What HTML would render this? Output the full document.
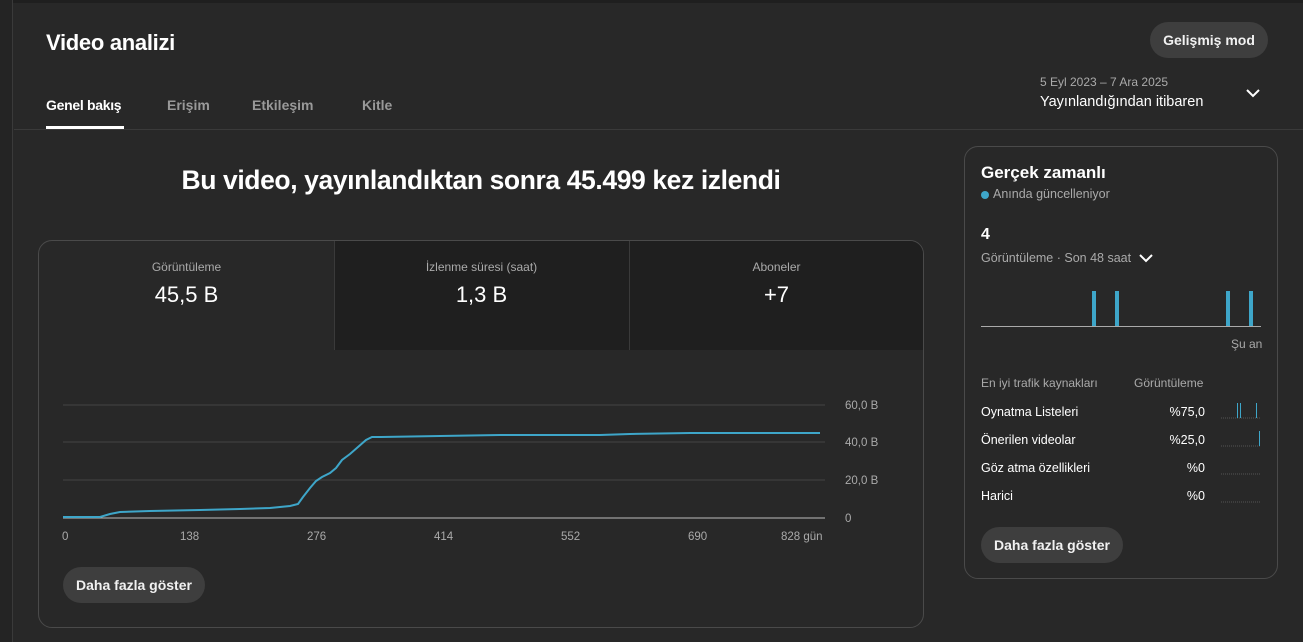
<!DOCTYPE html>
<html><head><meta charset="utf-8"><style>
*{margin:0;padding:0;box-sizing:border-box}
body{width:1303px;height:642px;background:#282828;font-family:"Liberation Sans",sans-serif;color:#fff;position:relative;overflow:hidden}
.a{position:absolute;white-space:nowrap}
.btn{position:absolute;background:#3e3e3e;border-radius:18px;font-weight:bold;font-size:14px;color:#f1f1f1;display:flex;align-items:center;justify-content:center}
.g{color:#aaa}
</style></head><body>
<div class="a" style="left:0;top:0;width:1303px;height:3px;background:#1f1f1f"></div>
<div class="a" style="left:0;top:0;width:13px;height:642px;background:#242424;border-right:1px solid #3a3a3a"></div>
<div class="a" style="left:46px;top:30px;font-size:22px;font-weight:bold;letter-spacing:-0.3px">Video analizi</div>
<div class="btn" style="left:1150px;top:22px;width:118px;height:36px">Gelişmiş mod</div>
<div class="a" style="left:46px;top:97px;font-size:14px;font-weight:bold;letter-spacing:-0.3px">Genel bakış</div>
<div class="a" style="left:46px;top:126px;width:78px;height:3px;background:#fff"></div>
<div class="a g" style="left:167px;top:97px;font-size:14px;font-weight:bold;color:#999">Erişim</div>
<div class="a g" style="left:252px;top:97px;font-size:14px;font-weight:bold;color:#999">Etkileşim</div>
<div class="a g" style="left:362px;top:97px;font-size:14px;font-weight:bold;color:#999">Kitle</div>
<div class="a g" style="left:1040px;top:75px;font-size:12px">5 Eyl 2023 – 7 Ara 2025</div>
<div class="a" style="left:1040px;top:94px;font-size:14.5px">Yayınlandığından itibaren</div>
<svg class="a" style="left:1245px;top:87px" width="16" height="12"><path d="M2 3 L8 9 L14 3" stroke="#fff" stroke-width="2" fill="none"/></svg>
<div class="a" style="left:14px;top:129px;width:1289px;height:1px;background:#3a3a3a"></div>

<div class="a" style="left:163px;top:165px;width:636px;font-size:26.5px;font-weight:bold;letter-spacing:-0.4px;text-align:center">Bu video, yayınlandıktan sonra 45.499 kez izlendi</div>

<div class="a" style="left:38px;top:240px;width:886px;height:388px;border:1px solid #4a4a4a;border-radius:14px;overflow:hidden">
 <div class="a" style="left:295px;top:0;width:295px;height:109px;background:#1f1f1f;border-left:1px solid #3a3a3a"></div>
 <div class="a" style="left:590px;top:0;width:296px;height:109px;background:#1f1f1f;border-left:1px solid #3a3a3a"></div>
 <div class="a g" style="left:0;width:295px;top:19px;font-size:12px;text-align:center">Görüntüleme</div>
 <div class="a" style="left:0;width:295px;top:41px;font-size:22px;text-align:center">45,5 B</div>
 <div class="a g" style="left:295px;width:295px;top:19px;font-size:12px;text-align:center">İzlenme süresi (saat)</div>
 <div class="a" style="left:295px;width:295px;top:41px;font-size:22px;text-align:center">1,3 B</div>
 <div class="a g" style="left:590px;width:295px;top:19px;font-size:12px;text-align:center">Aboneler</div>
 <div class="a" style="left:590px;width:295px;top:41px;font-size:22px;text-align:center">+7</div>
</div>
<svg class="a" style="left:0;top:0" width="930" height="560">
 <g stroke="#3a3a3a" stroke-width="1.5"><line x1="63" y1="405" x2="825" y2="405"/><line x1="63" y1="442" x2="825" y2="442"/><line x1="63" y1="480" x2="825" y2="480"/></g>
 <line x1="63" y1="518" x2="825" y2="518" stroke="#bbb" stroke-width="1"/>
 <polyline fill="none" stroke="#3ea6c9" stroke-width="2" points="63,517 100,517 110,514 120,512 150,511 200,510 240,509 270,508 290,506 298,504 303,497 310,488 316,481 322,477 330,473 336,468 342,460 350,454 358,447 366,440 372,437 380,437 440,436 500,435 600,435 630,434 690,433 820,433"/>
 <g fill="#aaa" font-family="Liberation Sans" font-size="11.5">
 <text x="845" y="409">60,0 B</text><text x="845" y="446">40,0 B</text><text x="845" y="484">20,0 B</text><text x="845" y="522">0</text>
 <text x="62" y="540">0</text><text x="180" y="540">138</text><text x="307" y="540">276</text><text x="434" y="540">414</text><text x="561" y="540">552</text><text x="688" y="540">690</text><text x="781" y="540">828 gün</text>
 </g>
</svg>
<div class="btn" style="left:63px;top:567px;width:142px;height:36px">Daha fazla göster</div>

<div class="a" style="left:964px;top:146px;width:314px;height:433px;border:1px solid #4a4a4a;border-radius:14px"></div>
<div class="a" style="left:981px;top:163px;font-size:17px;font-weight:bold">Gerçek zamanlı</div>
<div class="a" style="left:981px;top:191px;width:8px;height:8px;border-radius:50%;background:#3ea6c9"></div>
<div class="a g" style="left:993px;top:187px;font-size:12.5px">Anında güncelleniyor</div>
<div class="a" style="left:981px;top:226px;font-size:16px;font-weight:bold">4</div>
<div class="a g" style="left:981px;top:251px;font-size:12.5px">Görüntüleme · Son 48 saat</div>
<svg class="a" style="left:1138px;top:252px" width="16" height="12"><path d="M2 3 L8 9 L14 3" stroke="#fff" stroke-width="2" fill="none"/></svg>
<svg class="a" style="left:960px;top:280px" width="320" height="240">
 <line x1="21" y1="46.5" x2="301" y2="46.5" stroke="#aaa"/>
 <g fill="#3ea6c9"><rect x="132" y="11" width="4" height="35"/><rect x="155" y="11" width="4" height="35"/><rect x="266" y="11" width="4" height="35"/><rect x="289" y="11" width="4" height="35"/></g>
 <g stroke="#555" stroke-dasharray="1 1"><line x1="261" y1="138" x2="300" y2="138"/><line x1="261" y1="166" x2="300" y2="166"/><line x1="261" y1="194" x2="300" y2="194"/><line x1="261" y1="222" x2="300" y2="222"/></g>
 <g stroke="#3ea6c9" stroke-width="1"><line x1="277.5" y1="123" x2="277.5" y2="138"/><line x1="280.5" y1="123" x2="280.5" y2="138"/><line x1="296.5" y1="123" x2="296.5" y2="138"/><line x1="299.5" y1="151" x2="299.5" y2="166"/></g>
</svg>
<div class="a g" style="left:1231px;top:337px;font-size:12px">Şu an</div>
<div class="a g" style="left:981px;top:376px;font-size:12px">En iyi trafik kaynakları</div>
<div class="a g" style="left:1134px;top:376px;font-size:12px">Görüntüleme</div>
<div class="a" style="left:981px;top:405px;font-size:12.5px">Oynatma Listeleri</div><div class="a" style="left:1150px;width:55px;text-align:right;top:405px;font-size:12.5px">%75,0</div>
<div class="a" style="left:981px;top:433px;font-size:12.5px">Önerilen videolar</div><div class="a" style="left:1150px;width:55px;text-align:right;top:433px;font-size:12.5px">%25,0</div>
<div class="a" style="left:981px;top:461px;font-size:12.5px">Göz atma özellikleri</div><div class="a" style="left:1150px;width:55px;text-align:right;top:461px;font-size:12.5px">%0</div>
<div class="a" style="left:981px;top:489px;font-size:12.5px">Harici</div><div class="a" style="left:1150px;width:55px;text-align:right;top:489px;font-size:12.5px">%0</div>
<div class="btn" style="left:981px;top:527px;width:142px;height:36px">Daha fazla göster</div>
</body></html>
